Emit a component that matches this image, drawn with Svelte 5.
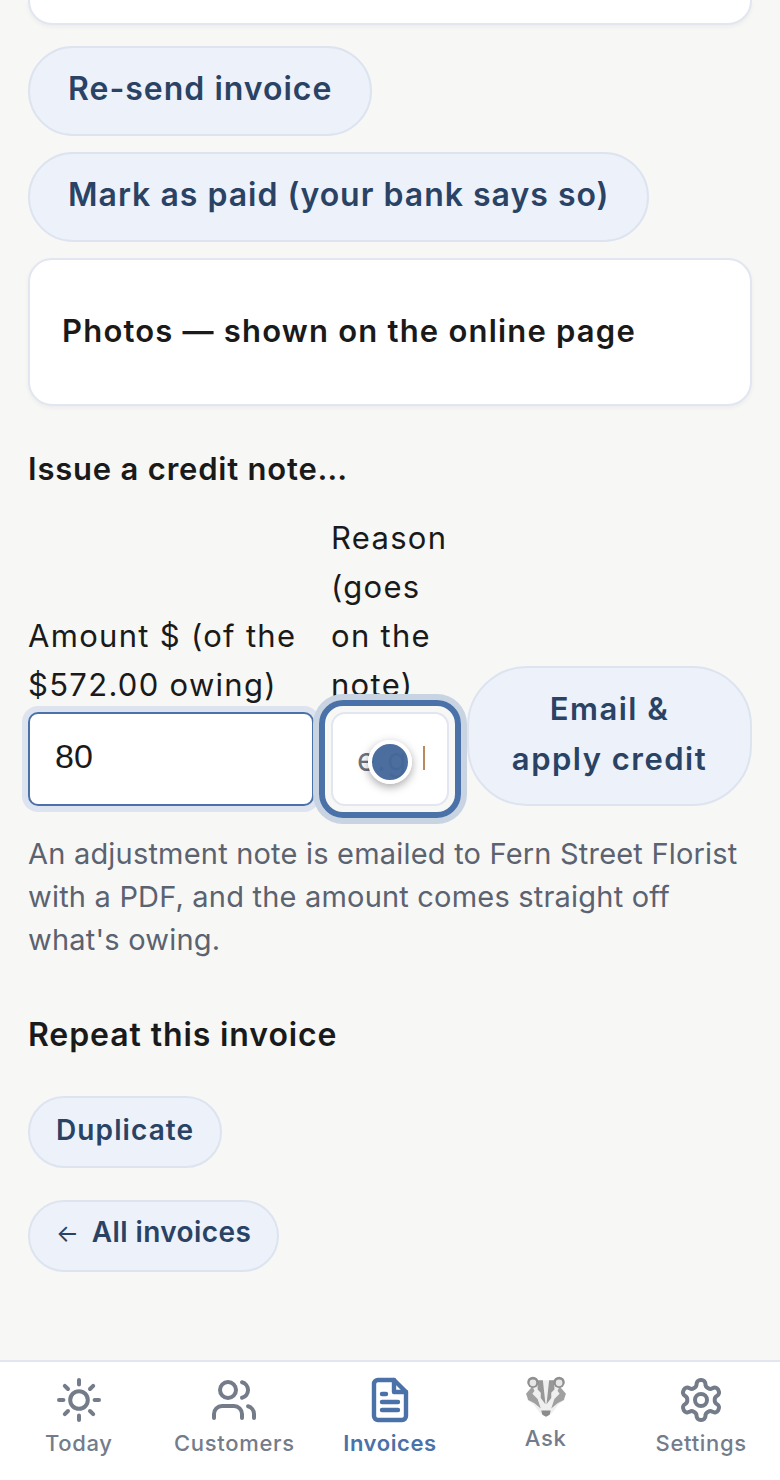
<script>
  const tabs = [
    { id: 'today', label: 'Today' },
    { id: 'customers', label: 'Customers' },
    { id: 'invoices', label: 'Invoices', active: true },
    { id: 'ask', label: 'Ask' },
    { id: 'settings', label: 'Settings' }
  ];
</script>

<div class="page">
  <main>
    <div class="card-stub"></div>
    <button class="pill big">Re-send invoice</button>
    <button class="pill big">Mark as paid (your bank says so)</button>
    <section class="card">
      <h3>Photos — shown on the online page</h3>
    </section>

    <h4 class="credit-title">Issue a credit note…</h4>
    <div class="credit-form">
      <label class="field">
        <span>Amount $ (of the $572.00 owing)</span>
        <input class="focused" value="80" />
      </label>
      <label class="field">
        <span>Reason (goes on the note)</span>
        <div class="reason">
          <span class="ph">e.g</span><span class="caret"></span>
          <span class="ring"></span>
          <span class="touch"></span>
        </div>
      </label>
      <button class="pill apply">Email &amp;<br />apply credit</button>
    </div>
    <p class="hint">An adjustment note is emailed to Fern Street Florist with a PDF, and the amount comes straight off what's owing.</p>

    <h4 class="repeat-title">Repeat this invoice</h4>
    <button class="pill small">Duplicate</button>
    <button class="pill small back"><span class="arrow">←</span> All invoices</button>
  </main>

  <nav>
    {#each tabs as tab (tab.id)}
      <div class="tab" class:active={tab.active} class:ask={tab.id === 'ask'}>
        {#if tab.id === 'today'}
          <svg viewBox="0 0 24 24" fill="none" stroke="currentColor" stroke-width="2" stroke-linecap="round" stroke-linejoin="round">
            <circle cx="12" cy="12" r="4.4" /><path d="M12 2v2.2M12 19.8V22M4.9 4.9l1.6 1.6M17.5 17.5l1.6 1.6M2 12h2.2M19.8 12H22M4.9 19.1l1.6-1.6M17.5 6.5l1.6-1.6" />
          </svg>
        {:else if tab.id === 'customers'}
          <svg viewBox="0 0 24 24" fill="none" stroke="currentColor" stroke-width="2" stroke-linecap="round" stroke-linejoin="round">
            <path d="M16 21v-2a4 4 0 0 0-4-4H6a4 4 0 0 0-4 4v2" /><circle cx="9" cy="7" r="4" /><path d="M22 21v-2a4 4 0 0 0-3-3.87M16 3.13a4 4 0 0 1 0 7.75" />
          </svg>
        {:else if tab.id === 'invoices'}
          <svg viewBox="0 0 24 24" fill="none" stroke="currentColor" stroke-width="2.2" stroke-linecap="round" stroke-linejoin="round">
            <path d="M14 2H6a2 2 0 0 0-2 2v16a2 2 0 0 0 2 2h12a2 2 0 0 0 2-2V8z" /><path d="M14 2v6h6M16 13H8M16 17H8M10 9H8" />
          </svg>
        {:else if tab.id === 'ask'}
          <svg viewBox="1 2 42 42">
            <path fill="#efefef" d="M12 6h20l4 6 5 7-2 3 1 3-6 4-6 8-6 4-6-4-6-8-6-4 1-3-2-3 5-7z" />
            <path fill="#979797" d="M14 6h5l2.500 23-4.500-6v-5l-3-3zM30 6h-5l-2.500 23 4.500-6v-5l3-3z" />
            <path fill="#a0a0a0" d="M3 19l6-7 2 4-2 3 5 5 3 9-6-5-6-3zM41 19l-6-7-2 4 2 3-5 5-3 9 6-5 6-3z" />
            <path fill="#8c8c8c" d="M17.500 35h9l-1 4-3.500 2-3.500-2z" />
            <circle cx="9.5" cy="8" r="5.400" fill="#8f8f8f" /><circle cx="34.500" cy="8" r="5.400" fill="#8f8f8f" />
            <circle cx="9.5" cy="8.500" r="3.200" fill="#e6e6e6" /><circle cx="34.500" cy="8.500" r="3.200" fill="#e6e6e6" />
          </svg>
        {:else}
          <svg viewBox="0 0 24 24" fill="none" stroke="currentColor" stroke-width="2" stroke-linecap="round" stroke-linejoin="round">
            <circle cx="12" cy="12" r="3" /><path d="M12.22 2h-.44a2 2 0 0 0-2 2v.18a2 2 0 0 1-1 1.73l-.43.25a2 2 0 0 1-2 0l-.15-.08a2 2 0 0 0-2.73.73l-.22.38a2 2 0 0 0 .73 2.73l.15.1a2 2 0 0 1 1 1.72v.51a2 2 0 0 1-1 1.74l-.15.09a2 2 0 0 0-.73 2.73l.22.38a2 2 0 0 0 2.73.73l.15-.08a2 2 0 0 1 2 0l.43.25a2 2 0 0 1 1 1.73V20a2 2 0 0 0 2 2h.44a2 2 0 0 0 2-2v-.18a2 2 0 0 1 1-1.73l.43-.25a2 2 0 0 1 2 0l.15.08a2 2 0 0 0 2.73-.73l.22-.39a2 2 0 0 0-.73-2.73l-.15-.08a2 2 0 0 1-1-1.74v-.5a2 2 0 0 1 1-1.74l.15-.09a2 2 0 0 0 .73-2.73l-.22-.38a2 2 0 0 0-2.73-.73l-.15.08a2 2 0 0 1-2 0l-.43-.25a2 2 0 0 1-1-1.73V4a2 2 0 0 0-2-2z" />
          </svg>
        {/if}
        <span>{tab.label}</span>
      </div>
    {/each}
  </nav>
</div>

<style>
  :global(body) {
    background: #f7f7f5;
    font-family: Inter, "Noto Sans", sans-serif;
    color: #1a1a1a;
  }

  .page {
    height: 1480px;
    display: flex;
    flex-direction: column;
    overflow: hidden;
  }

  main {
    flex: 1;
    display: flex;
    flex-direction: column;
    align-items: flex-start;
    padding: 0 28px;
    box-sizing: border-box;
  }

  .card-stub {
    align-self: stretch;
    height: 25px;
    box-sizing: border-box;
    background: #fff;
    border: 2px solid #e2e6f0;
    border-top: 0;
    border-radius: 0 0 24px 24px;
    box-shadow: 0 2px 4px rgba(30, 40, 70, 0.05);
  }

  .pill {
    font-family: inherit;
    font-weight: 600;
    color: #2a4365;
    background: #edf1f9;
    border: 2px solid #dde4f0;
    box-sizing: border-box;
  }

  .big {
    height: 90px;
    padding: 0 38px 6px;
    border-radius: 45px;
    font-size: 32px;
    letter-spacing: 1px;
  }

  .big:first-of-type {
    margin-top: 21px;
  }

  .big + .big {
    margin-top: 16px;
  }

  .card {
    align-self: stretch;
    margin-top: 16px;
    height: 148px;
    box-sizing: border-box;
    display: flex;
    align-items: center;
    padding: 0 32px 4px;
    background: #fff;
    border: 2px solid #e2e6f0;
    border-radius: 24px;
    box-shadow: 0 2px 4px rgba(30, 40, 70, 0.05);
  }

  h3 {
    margin: 0;
    font-size: 31px;
    font-weight: 600;
    letter-spacing: 1.2px;
  }

  h4 {
    margin: 0;
    font-weight: 600;
  }

  .credit-title {
    margin-top: 45px;
    font-size: 31px;
    line-height: 36px;
    letter-spacing: 0.8px;
  }

  .credit-form {
    align-self: stretch;
    margin-top: 26px;
    display: grid;
    grid-template-columns: 286px 118px 1fr;
    column-gap: 17px;
    align-items: end;
  }

  .field {
    display: flex;
    flex-direction: column;
    font-size: 31px;
    line-height: 49px;
    letter-spacing: 1.3px;
    min-width: 0;
  }

  .field span {
    display: block;
  }

  input {
    width: 100%;
    height: 94px;
    margin-top: 3px;
    box-sizing: border-box;
    padding: 0 25px 6px;
    font-family: "Liberation Sans", sans-serif;
    font-size: 34px;
    color: #1a1a1a;
    background: #fff;
    border: 2px solid #4a72a8;
    border-radius: 10px;
    outline: none;
  }

  input.focused {
    box-shadow: 0 0 0 6px #dde4f0;
  }

  .reason {
    position: relative;
    height: 94px;
    margin-top: 3px;
    box-sizing: border-box;
    background: #fff;
    border: 2px solid #e2e6f0;
    border-radius: 14px;
    display: flex;
    align-items: center;
    padding-left: 24px;
    font-size: 32px;
    letter-spacing: 1px;
    color: #6b7280;
    overflow: visible;
  }

  .field .reason .ph {
    display: inline;
  }

  .field .reason .caret {
    position: absolute;
    left: 90px;
    top: 32px;
    width: 2px;
    height: 24px;
    background: #b98a5e;
  }

  .field .reason .ring {
    position: absolute;
    inset: -14px;
    border: 6px solid #4a72a8;
    border-radius: 24px;
    box-shadow: 0 0 0 6px #c9d4e2;
    pointer-events: none;
  }

  .field .reason .touch {
    position: absolute;
    left: 35px;
    top: 26px;
    width: 36px;
    height: 36px;
    box-sizing: content-box;
    border: 4px solid #fff;
    border-radius: 50%;
    background: rgba(68, 104, 155, 0.96);
    box-shadow: 0 3px 10px rgba(0, 0, 0, 0.35);
  }

  .apply {
    height: 140px;
    margin-left: 1px;
    padding: 0 10px 4px;
    border-radius: 60px;
    font-size: 31px;
    line-height: 50px;
    letter-spacing: 1.5px;
  }

  .hint {
    margin: 26px 0 0;
    font-size: 29px;
    line-height: 43px;
    letter-spacing: 0.2px;
    color: #5b6270;
  }

  .repeat-title {
    margin-top: 54px;
    font-size: 32px;
    line-height: 40px;
    letter-spacing: 0.9px;
  }

  .small {
    height: 72px;
    padding: 0 26px 4px;
    border-radius: 36px;
    font-size: 28px;
    letter-spacing: 1.1px;
    margin-top: 41px;
  }

  .back {
    margin-top: 32px;
    padding-bottom: 8px;
    letter-spacing: 0.4px;
  }

  .arrow {
    font-size: 24px;
    font-weight: 400;
    margin-right: 5px;
  }

  nav {
    height: 120px;
    box-sizing: border-box;
    flex: none;
    display: grid;
    grid-template-columns: repeat(5, 1fr);
    padding: 0 1px;
    background: #fff;
    border-top: 2px solid #e2e6f0;
  }

  .tab {
    display: flex;
    flex-direction: column;
    align-items: center;
    padding-top: 14px;
    color: #747c8a;
    font-size: 22px;
    letter-spacing: 0.7px;
    font-weight: 500;
  }

  .tab svg {
    width: 48px;
    height: 48px;
  }

  .tab span {
    margin-top: 2px;
    line-height: 34px;
  }

  .tab.active {
    color: #4a72a8;
    font-weight: 600;
    letter-spacing: 0.6px;
  }

  .tab.ask svg {
    width: 44px;
    height: 44px;
  }

  .tab.ask span {
    margin-top: 1px;
  }
</style>
